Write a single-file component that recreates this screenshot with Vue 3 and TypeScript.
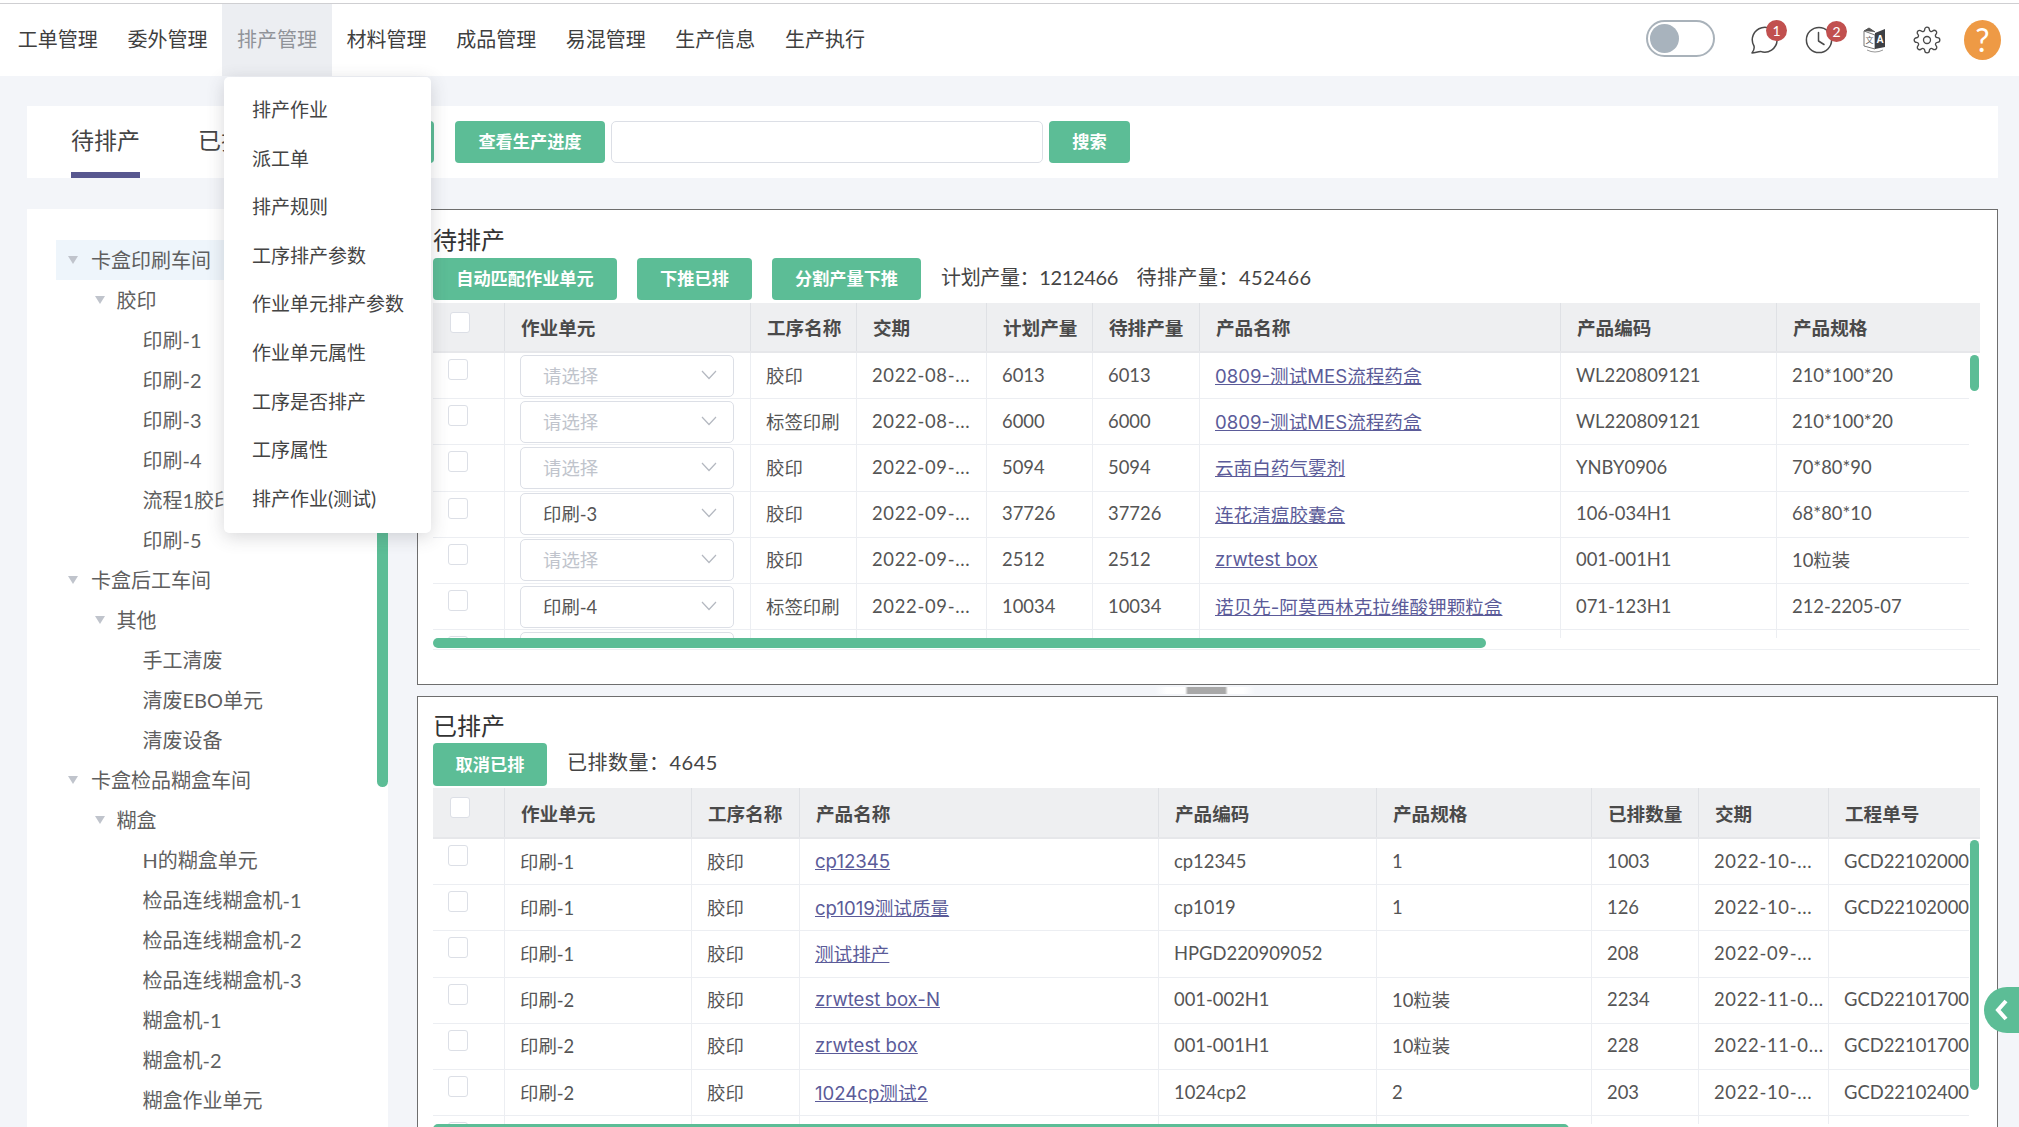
<script setup lang="ts">
interface TreeNode { label: string; level: number; open?: boolean; selected?: boolean }
interface PendingRow { unit: string; proc: string; date: string; plan: string; wait: string; name: string; code: string; spec: string }
interface DoneRow { unit: string; proc: string; name: string; code: string; spec: string; qty: string; date: string; project: string }

const navItems: string[] = ['工单管理', '委外管理', '排产管理', '材料管理', '成品管理', '易混管理', '生产信息', '生产执行']
const menuItems: string[] = ['排产作业', '派工单', '排产规则', '工序排产参数', '作业单元排产参数', '作业单元属性', '工序是否排产', '工序属性', '排产作业(测试)']

const tree: TreeNode[] = [
  { label: '卡盒印刷车间', level: 1, open: true, selected: true },
  { label: '胶印', level: 2, open: true },
  { label: '印刷-1', level: 3 }, { label: '印刷-2', level: 3 }, { label: '印刷-3', level: 3 }, { label: '印刷-4', level: 3 },
  { label: '流程1胶印', level: 3 }, { label: '印刷-5', level: 3 },
  { label: '卡盒后工车间', level: 1, open: true },
  { label: '其他', level: 2, open: true },
  { label: '手工清废', level: 3 }, { label: '清废EBO单元', level: 3 }, { label: '清废设备', level: 3 },
  { label: '卡盒检品糊盒车间', level: 1, open: true },
  { label: '糊盒', level: 2, open: true },
  { label: 'H的糊盒单元', level: 3 }, { label: '检品连线糊盒机-1', level: 3 }, { label: '检品连线糊盒机-2', level: 3 },
  { label: '检品连线糊盒机-3', level: 3 }, { label: '糊盒机-1', level: 3 }, { label: '糊盒机-2', level: 3 }, { label: '糊盒作业单元', level: 3 }
]

const pendingHead: string[] = ['作业单元', '工序名称', '交期', '计划产量', '待排产量', '产品名称', '产品编码', '产品规格']
const pending: PendingRow[] = [
  { unit: '', proc: '胶印', date: '2022-08-...', plan: '6013', wait: '6013', name: '0809-测试MES流程药盒', code: 'WL220809121', spec: '210*100*20' },
  { unit: '', proc: '标签印刷', date: '2022-08-...', plan: '6000', wait: '6000', name: '0809-测试MES流程药盒', code: 'WL220809121', spec: '210*100*20' },
  { unit: '', proc: '胶印', date: '2022-09-...', plan: '5094', wait: '5094', name: '云南白药气雾剂', code: 'YNBY0906', spec: '70*80*90' },
  { unit: '印刷-3', proc: '胶印', date: '2022-09-...', plan: '37726', wait: '37726', name: '连花清瘟胶囊盒', code: '106-034H1', spec: '68*80*10' },
  { unit: '', proc: '胶印', date: '2022-09-...', plan: '2512', wait: '2512', name: 'zrwtest box', code: '001-001H1', spec: '10粒装' },
  { unit: '印刷-4', proc: '标签印刷', date: '2022-09-...', plan: '10034', wait: '10034', name: '诺贝先-阿莫西林克拉维酸钾颗粒盒', code: '071-123H1', spec: '212-2205-07' },
  { unit: '', proc: '', date: '', plan: '', wait: '', name: '', code: '', spec: '' }
]

const doneHead: string[] = ['作业单元', '工序名称', '产品名称', '产品编码', '产品规格', '已排数量', '交期', '工程单号']
const done: DoneRow[] = [
  { unit: '印刷-1', proc: '胶印', name: 'cp12345', code: 'cp12345', spec: '1', qty: '1003', date: '2022-10-...', project: 'GCD221020001' },
  { unit: '印刷-1', proc: '胶印', name: 'cp1019测试质量', code: 'cp1019', spec: '1', qty: '126', date: '2022-10-...', project: 'GCD221020002' },
  { unit: '印刷-1', proc: '胶印', name: '测试排产', code: 'HPGD220909052', spec: '', qty: '208', date: '2022-09-...', project: '' },
  { unit: '印刷-2', proc: '胶印', name: 'zrwtest box-N', code: '001-002H1', spec: '10粒装', qty: '2234', date: '2022-11-0...', project: 'GCD221017001' },
  { unit: '印刷-2', proc: '胶印', name: 'zrwtest box', code: '001-001H1', spec: '10粒装', qty: '228', date: '2022-11-0...', project: 'GCD221017001' },
  { unit: '印刷-2', proc: '胶印', name: '1024cp测试2', code: '1024cp2', spec: '2', qty: '203', date: '2022-10-...', project: 'GCD221024001' },
  { unit: '', proc: '', name: '', code: '', spec: '', qty: '', date: '', project: '' }
]
</script>

<template>
  <div class="app">
    <header class="nav">
      <div v-for="item in navItems" :key="item" class="nav-item" :class="{ active: item === '排产管理' }">{{ item }}</div>
      <div class="tools">
        <div class="toggle"><span class="knob"></span></div>
        <div class="tool chat">
          <svg width="28" height="28" viewBox="0 0 28 28" fill="none" stroke="#4a4a4a" stroke-width="1.5">
            <path d="M2 27 C4 24.5 4.6 22.5 4 20 A12.4 12.4 0 1 1 10.5 25.4 C7.5 25.6 4.8 27 2 27 Z" stroke-linejoin="round" />
          </svg>
          <span class="badge badge-chat">1</span>
        </div>
        <div class="tool clock">
          <svg width="28" height="28" viewBox="0 0 28 28" fill="none" stroke="#4a4a4a" stroke-width="1.5">
            <circle cx="14" cy="14" r="12.6" />
            <path d="M13.5 6.5 V15 L19 18.5" stroke-linecap="round" stroke-linejoin="round" />
          </svg>
          <span class="badge badge-clock">2</span>
        </div>
        <div class="tool lang">
          <svg width="24" height="26" viewBox="0 0 24 26">
            <path d="M1 4 L12 8 V22 L1 19 Z" fill="#fff" stroke="#777" stroke-width="1" />
            <path d="M1 4 L6 1 L12 5" fill="#555" stroke="#555" stroke-width="1" />
            <path d="M12 6 L22 2 V20 L12 22 Z" fill="#3d3f44" />
            <text x="17" y="15.5" font-size="10" font-weight="700" fill="#fff" text-anchor="middle" font-family="Liberation Sans, sans-serif">A</text>
            <text x="6.5" y="15.5" font-size="8" fill="#666" text-anchor="middle" font-family="Noto Sans CJK SC, sans-serif">文</text>
            <path d="M4 23 Q12 27 20 23" fill="none" stroke="#999" stroke-width="1" />
          </svg>
        </div>
        <div class="tool gear">
          <svg width="28" height="28" viewBox="0 0 24 24" fill="none" stroke="#4a4a4a" stroke-width="1.15" stroke-linejoin="round">
            <circle cx="12" cy="12" r="3" />
            <path d="M19.4 15a1.65 1.65 0 0 0 .33 1.82l.06.06a2 2 0 0 1 0 2.83 2 2 0 0 1-2.83 0l-.06-.06a1.65 1.65 0 0 0-1.82-.33 1.65 1.65 0 0 0-1 1.51V21a2 2 0 0 1-2 2 2 2 0 0 1-2-2v-.09A1.65 1.65 0 0 0 9 19.4a1.65 1.65 0 0 0-1.82.33l-.06.06a2 2 0 0 1-2.83 0 2 2 0 0 1 0-2.83l.06-.06a1.65 1.65 0 0 0 .33-1.82 1.65 1.65 0 0 0-1.51-1H3a2 2 0 0 1-2-2 2 2 0 0 1 2-2h.09A1.65 1.65 0 0 0 4.6 9a1.65 1.65 0 0 0-.33-1.82l-.06-.06a2 2 0 0 1 0-2.83 2 2 0 0 1 2.83 0l.06.06a1.65 1.65 0 0 0 1.82.33H9a1.65 1.65 0 0 0 1-1.51V3a2 2 0 0 1 2-2 2 2 0 0 1 2 2v.09a1.65 1.65 0 0 0 1 1.51 1.65 1.65 0 0 0 1.82-.33l.06-.06a2 2 0 0 1 2.83 0 2 2 0 0 1 0 2.83l-.06.06a1.65 1.65 0 0 0-.33 1.82V9a1.65 1.65 0 0 0 1.51 1H21a2 2 0 0 1 2 2 2 2 0 0 1-2 2h-.09a1.65 1.65 0 0 0-1.51 1z" />
          </svg>
        </div>
        <div class="help">?</div>
      </div>
    </header>

    <div class="menu">
      <div v-for="item in menuItems" :key="item" class="menu-item">{{ item }}</div>
    </div>

    <main class="main">
      <section class="tabbar">
        <div class="tab tab-on">待排产</div>
        <div class="tab">已排产</div>
        <div class="btn btn-hidden"></div>
        <div class="btn btn-tab">查看生产进度</div>
        <div class="search-input"></div>
        <div class="btn btn-search">搜索</div>
      </section>

      <div class="content">
        <aside class="side">
          <div class="side-thumb"></div>
          <div v-for="node in tree" :key="node.label" class="tree-row" :class="['lv' + node.level, { sel: node.selected }]">
            <i v-if="node.open" class="tri"></i>
            <span>{{ node.label }}</span>
          </div>
        </aside>

        <div class="panels">
          <section class="panel panel-top">
            <h2 class="panel-title">待排产</h2>
            <div class="toolbar">
              <div class="btn btn-a">自动匹配作业单元</div>
              <div class="btn btn-b">下推已排</div>
              <div class="btn btn-c">分割产量下推</div>
              <span class="stat stat-first">计划产量：1212466</span>
              <span class="stat stat-second">待排产量：452466</span>
            </div>
            <div class="table t1">
              <div class="vthumb vthumb-1"></div>
              <div class="row head">
                <div class="cell"><span class="check check-head"></span></div>
                <div v-for="h in pendingHead" :key="h" class="cell">{{ h }}</div>
              </div>
              <div class="tbody">
                <div v-for="(r, i) in pending" :key="i" class="row body">
                  <div class="cell"><span class="check"></span></div>
                  <div class="cell cell-select">
                    <div class="select">
                      <span :class="{ ph: !r.unit }">{{ r.unit || '请选择' }}</span>
                      <svg width="16" height="10" viewBox="0 0 16 10" fill="none" stroke="#b4b8c0" stroke-width="1.2"><path d="M1 1 L8 8.5 L15 1" /></svg>
                    </div>
                  </div>
                  <div class="cell">{{ r.proc }}</div>
                  <div class="cell cell-date">{{ r.date }}</div>
                  <div class="cell">{{ r.plan }}</div>
                  <div class="cell">{{ r.wait }}</div>
                  <div class="cell"><a class="link">{{ r.name }}</a></div>
                  <div class="cell">{{ r.code }}</div>
                  <div class="cell cell-last">{{ r.spec }}</div>
                </div>
              </div>
              <div class="hbar"><div class="hthumb hthumb-1"></div></div>
            </div>
          </section>

          <div class="splitter"><span class="handle"></span></div>

          <section class="panel panel-bottom">
            <h2 class="panel-title">已排产</h2>
            <div class="toolbar toolbar-2">
              <div class="btn btn-d">取消已排</div>
              <span class="stat stat-first">已排数量：4645</span>
            </div>
            <div class="table t2">
              <div class="vthumb vthumb-2"></div>
              <div class="row head">
                <div class="cell"><span class="check check-head"></span></div>
                <div v-for="h in doneHead" :key="h" class="cell">{{ h }}</div>
              </div>
              <div class="tbody">
                <div v-for="(r, i) in done" :key="i" class="row body">
                  <div class="cell"><span class="check"></span></div>
                  <div class="cell">{{ r.unit }}</div>
                  <div class="cell">{{ r.proc }}</div>
                  <div class="cell"><a class="link">{{ r.name }}</a></div>
                  <div class="cell">{{ r.code }}</div>
                  <div class="cell">{{ r.spec }}</div>
                  <div class="cell">{{ r.qty }}</div>
                  <div class="cell cell-date">{{ r.date }}</div>
                  <div class="cell cell-last">{{ r.project }}</div>
                </div>
              </div>
              <div class="hbar"><div class="hthumb hthumb-2"></div></div>
            </div>
          </section>
        </div>
      </div>
    </main>

    <div class="edge-tab">
      <svg width="14" height="22" viewBox="0 0 14 22" fill="none" stroke="#fff" stroke-width="4"><path d="M11 2 L3 11 L11 20" /></svg>
    </div>
  </div>
</template>

<style scoped>
.app {
  position: relative;
  width: 2019px;
  height: 1127px;
  overflow: hidden;
  background: #f3f5f9;
  color: #555;
  font-family: Lato, "Noto Sans CJK SC", sans-serif;
  font-size: 18.4px;
}

/* top navigation */
.nav {
  box-sizing: border-box;
  height: 76px;
  padding: 3px 18px 0 3px;
  display: flex;
  align-items: stretch;
  background-color: #fff;
  background-image: linear-gradient(#fff 3px, #cfcfd2 3px, #cfcfd2 4px, #fff 4px);
}
.nav-item {
  width: 109.6px;
  display: flex;
  align-items: center;
  justify-content: center;
  box-sizing: border-box;
  padding-bottom: 3px;
  font-size: 20px;
  color: #3f3f3f;
  margin-top: 1px;
}
.nav-item.active {
  background: #eceef2;
  color: #909399;
}
.tools {
  margin-left: auto;
  display: flex;
  align-items: center;
}
.toggle {
  box-sizing: border-box;
  width: 69px;
  height: 37px;
  border: 2px solid #a9b2ba;
  border-radius: 19px;
  padding: 2px;
  margin-bottom: 2px;
}
.knob {
  display: block;
  width: 29px;
  height: 29px;
  border-radius: 50%;
  background: #a8b3bd;
}
.tool {
  position: relative;
  display: flex;
}
.chat { margin-left: 35px; }
.clock { margin-left: 27px; }
.lang { margin-left: 30px; }
.gear { margin-left: 26px; }
.badge {
  position: absolute;
  width: 21px;
  height: 21px;
  border-radius: 50%;
  background: #c1504f;
  color: #fff;
  font-size: 14px;
  line-height: 21px;
  text-align: center;
}
.badge-chat { left: 16px; top: -6px; }
.badge-clock { left: 21px; top: -5px; }
.help {
  margin-left: 23px;
  width: 37px;
  height: 40px;
  border-radius: 50%;
  background: #ee9a45;
  color: #fff;
  font-size: 32px;
  font-weight: 400;
  line-height: 40px;
  text-align: center;
}

/* dropdown */
.menu {
  position: absolute;
  z-index: 5;
  left: 224px;
  top: 77px;
  box-sizing: border-box;
  width: 207px;
  height: 456px;
  padding: 9px 0 0 28px;
  background: #fff;
  border-radius: 5px;
  box-shadow: 0 4px 18px rgba(60, 60, 70, 0.2);
}
.menu-item {
  height: 48.6px;
  line-height: 48.6px;
  font-size: 19px;
  color: #444;
  white-space: nowrap;
}

/* page */
.main {
  padding: 30px 21px 0 27px;
}
.tabbar {
  height: 72px;
  padding-left: 44px;
  display: flex;
  align-items: center;
  background: #fff;
}
.tab {
  position: relative;
  align-self: stretch;
  width: 69px;
  margin-right: 58px;
  padding-top: 16px;
  box-sizing: border-box;
  font-size: 23px;
  line-height: 36px;
  color: #444;
  white-space: nowrap;
}
.tab-on {
  border-bottom: 6px solid #57578f;
}
.btn {
  box-sizing: border-box;
  height: 42px;
  padding-bottom: 3px;
  display: flex;
  align-items: center;
  justify-content: center;
  border-radius: 4px;
  background: #5cbd96;
  color: #fff;
  font-size: 17.2px;
  font-weight: 700;
  white-space: nowrap;
}
.btn-hidden { width: 128px; margin-left: -19px; }
.btn-tab { width: 150px; margin-left: 21px; }
.search-input {
  box-sizing: border-box;
  width: 432px;
  height: 42px;
  margin-left: 6px;
  background: #fff;
  border: 1px solid #dcdfe6;
  border-radius: 5px;
}
.btn-search { width: 81px; margin-left: 6px; }

.content {
  margin-top: 31px;
  display: flex;
  gap: 29px;
  height: 918px;
}

/* tree */
.side {
  position: relative;
  box-sizing: border-box;
  width: 361px;
  padding: 31px 16px 0 29px;
  background: #fff;
  overflow: hidden;
}
.side-thumb {
  position: absolute;
  right: 0;
  top: 31px;
  width: 11px;
  height: 547px;
  background: #5cbd96;
  border-radius: 6px;
}
.tree-row {
  position: relative;
  box-sizing: border-box;
  height: 40px;
  padding-bottom: 2px;
  display: flex;
  align-items: center;
  font-size: 20px;
  color: #5f5f5f;
  white-space: nowrap;
}
.tree-row.sel { background: #eef5fb; }
.lv1 { padding-left: 35px; }
.lv2 { padding-left: 60.5px; }
.lv3 { padding-left: 86.5px; }
.tri {
  position: absolute;
  top: 16px;
  width: 0;
  height: 0;
  border-left: 5px solid transparent;
  border-right: 5px solid transparent;
  border-top: 8px solid #c0c4cc;
}
.lv1 .tri { left: 12px; }
.lv2 .tri { left: 39px; }

/* panels */
.panels {
  flex: 1;
  min-width: 0;
  display: flex;
  flex-direction: column;
}
.panel {
  box-sizing: border-box;
  padding: 12px 16px 0 15px;
  background: #fff;
  border: 1px solid #6e6e6e;
  overflow: hidden;
}
.panel-top { height: 476px; }
.panel-bottom { flex: 1; min-height: 0; border-bottom: 0; padding-top: 10px; }
.panel-title {
  margin: 0;
  height: 36px;
  font-size: 24px;
  font-weight: 400;
  line-height: 36px;
  color: #333;
}
.panel-bottom .panel-title { line-height: 38px; }
.toolbar {
  height: 42px;
  display: flex;
  align-items: center;
}
.toolbar-2 { align-items: flex-start; }
.btn-a { width: 184px; }
.btn-b { width: 115px; margin-left: 20px; }
.btn-c { width: 149px; margin-left: 20px; }
.btn-d { width: 114px; height: 43px; flex: none; }
.stat {
  padding-bottom: 6px;
  font-size: 20px;
  letter-spacing: -0.35px;
  color: #444;
  white-space: nowrap;
}
.toolbar-2 .stat { line-height: 38px; letter-spacing: 0.5px; padding-bottom: 0; }
.stat-first { margin-left: 20px; }
.stat-second { margin-left: 18.5px; letter-spacing: 0.5px; }

/* tables */
.table {
  position: relative;
  width: 1547px;
  margin-top: 3px;
  overflow: hidden;
}
.t1 { border-bottom: 1px solid #eef0f3; }
.row { display: grid; }
.t1 .row { grid-template-columns: 72px 246px 106px 130px 106px 107px 361px 216px 192px; }
.t2 .row { grid-template-columns: 72px 187px 108px 359px 218px 215px 107px 130px 140px; }
.t1 .head { grid-template-columns: 72px 246px 106px 130px 106px 107px 361px 216px 1fr; }
.t2 .head { grid-template-columns: 72px 187px 108px 359px 218px 215px 107px 130px 1fr; }
.head {
  height: 50px;
  background: #eeeff1;
  border-bottom: 2px solid #e6e7ea;
  box-sizing: border-box;
  font-size: 18.6px;
  font-weight: 700;
  color: #4a4a4a;
}
.t2 .head { height: 51px; }
.head .cell { border-right: 1px solid #dfe1e5; padding-left: 16px; }
.t1 .head .cell { padding-bottom: 1px; }
.head .cell:first-child { padding-left: 14px; }
.head .cell:last-child { border-right: 0; }
.tbody {
  width: 1536px;
  overflow: hidden;
}
.t1 .tbody { height: 285px; }
.t2 .tbody { height: 285px; }
.body {
  box-sizing: border-box;
  height: 46.2px;
  border-bottom: 1px solid #eceef2;
}
.body .cell { padding-bottom: 2px; padding-left: 15px; }
.cell {
  box-sizing: border-box;
  display: flex;
  align-items: center;
  min-width: 0;
  padding-left: 14px;
  overflow: hidden;
  white-space: nowrap;
  border-right: 1px solid #eceef2;
}
.cell-last { border-right: 0; }
.cell-date { letter-spacing: 0.7px; }
.body .cell-select { padding: 0 16px 0 15px; }
.check {
  box-sizing: border-box;
  display: block;
  align-self: flex-start;
  width: 20px;
  height: 21px;
  margin-top: 6px;
  background: #fff;
  border: 1px solid #dcdfe6;
  border-radius: 3px;
  flex: none;
}
.check-head { margin-top: 9px; margin-left: 3px; }
.select {
  box-sizing: border-box;
  flex: 1;
  height: 42px;
  padding: 0 16px 2px 22px;
  display: flex;
  align-items: center;
  justify-content: space-between;
  border: 1px solid #dcdfe6;
  border-radius: 5px;
  background: #fff;
}
.ph { color: #c0c4cc; }
.link {
  font-family: Inter, "Noto Sans CJK SC", sans-serif;
  font-size: 18.6px;
  color: #5b5b99;
  text-decoration: underline;
}
.hbar {
  height: 11px;
}
.hthumb {
  height: 10px;
  background: #5cbd96;
  border-radius: 5px;
}
.hthumb-1 { width: 1053px; }
.hthumb-2 { width: 1136px; }
.vthumb {
  position: absolute;
  z-index: 1;
  right: 1px;
  width: 9px;
  background: #5cbd96;
  border-radius: 5px;
}
.vthumb-1 { top: 52px; height: 36px; }
.vthumb-2 { top: 52px; height: 250px; }

.splitter {
  height: 11px;
  padding-right: 5px;
  display: flex;
  align-items: center;
  justify-content: center;
}
.handle {
  width: 100px;
  height: 7px;
  background: linear-gradient(90deg, #f3f5f9 0, #fff 12%, #fff 30%, #a8a8a8 33%, #a8a8a8 70%, #fff 73%, #fff 88%, #f3f5f9 100%);
}

.edge-tab {
  position: absolute;
  right: 0;
  top: 987px;
  box-sizing: border-box;
  width: 35px;
  height: 46px;
  padding: 12px 0 0 11px;
  background: #5cbd96;
  border-radius: 23px 0 0 23px;
}
</style>
